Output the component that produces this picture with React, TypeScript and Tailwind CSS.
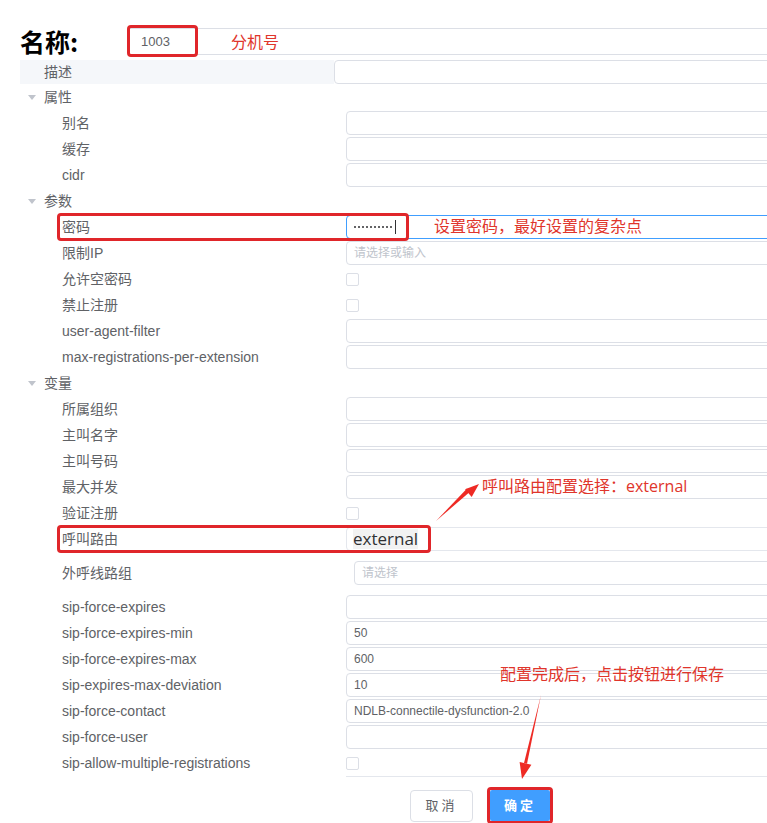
import React from "react";

const FONT = "font-['Liberation_Sans','Noto_Sans_CJK_SC',sans-serif]";

function Field({
  value,
  placeholder,
  className = "",
}: {
  value?: string;
  placeholder?: string;
  className?: string;
}) {
  return (
    <div
      className={`h-[24px] flex-1 border border-[#dcdfe6] rounded-[4px] px-[7px] flex items-center text-[12px] ${
        value ? "text-[#606266]" : "text-[#c0c4cc]"
      } ${className}`}
    >
      {value ?? placeholder ?? ""}
    </div>
  );
}

function Check() {
  return <div className="w-[13px] h-[13px] border border-[#dcdfe6] rounded-[2px] bg-white" />;
}

function Row({
  label,
  children,
  h = "h-[26px]",
}: {
  label: string;
  children?: React.ReactNode;
  h?: string;
}) {
  return (
    <div className={`${h} flex items-center relative`}>
      <div className="w-[326px] pl-[42px] text-[14px] leading-[18px] pb-[1px] text-[#606266] shrink-0 whitespace-nowrap">{label}</div>
      <div className="flex-1 flex items-center">{children}</div>
    </div>
  );
}

function Group({ label }: { label: string }) {
  return (
    <div className="h-[26px] flex items-center">
      <div className="w-[24px] flex justify-end pr-[8px]">
        <svg width="8" height="5" viewBox="0 0 8 5">
          <polygon points="0,0 8,0 4,5" fill="#c0c4cc" />
        </svg>
      </div>
      <div className="text-[14px] leading-[18px] pb-[1px] text-[#606266]">{label}</div>
    </div>
  );
}

const dots = Array.from({ length: 10 });
const RED = "text-[16px] text-[#e0352b] font-['Open_Sans','Noto_Sans_CJK_SC',sans-serif] leading-[20px] whitespace-nowrap";

export default function App() {
  return (
    <div className={`relative w-[767px] h-[823px] overflow-hidden bg-white ${FONT}`}>
      <div className="w-[860px] pl-[20px] pt-[28px]">
        {/* 名称 */}
        <div className="h-[27px] flex items-center">
          <div className="w-[108px] text-[25px] font-bold text-black font-['Noto_Sans_CJK_SC',sans-serif] leading-none">
            名称:
          </div>
          <div className="flex-1 h-[27px] border-y border-[#dcdfe6] flex items-center pl-[13px] text-[13px] text-[#606266]">
            1003
          </div>
        </div>
        {/* 描述 */}
        <div className="mt-[5px] h-[24px] flex items-center">
          <div className="w-[314px] h-[24px] bg-[#f5f7fa] pl-[24px] flex items-center text-[14px] text-[#606266]">
            描述
          </div>
          <Field />
        </div>
        <Group label="属性" />
        <Row label="别名"><Field /></Row>
        <Row label="缓存"><Field /></Row>
        <Row label="cidr"><Field /></Row>
        <Group label="参数" />
        <Row label="密码">
          <div className="h-[24px] flex-1 border border-[#409eff] rounded-[4px] pl-[7px] flex items-center gap-[2px]">
            {dots.map((_, i) => (
              <span key={i} className="w-[2px] h-[2px] rounded-full bg-[#303133]" />
            ))}
            <span className="ml-[1px] w-px h-[14px] bg-[#303133]" />
          </div>
        </Row>
        <Row label="限制IP"><Field placeholder="请选择或输入" /></Row>
        <Row label="允许空密码"><Check /></Row>
        <Row label="禁止注册"><Check /></Row>
        <Row label="user-agent-filter"><Field /></Row>
        <Row label="max-registrations-per-extension"><Field /></Row>
        <Group label="变量" />
        <Row label="所属组织"><Field /></Row>
        <Row label="主叫名字"><Field /></Row>
        <Row label="主叫号码"><Field /></Row>
        <Row label="最大并发"><Field /></Row>
        <Row label="验证注册"><Check /></Row>
        <Row label="呼叫路由">
          <div className="h-[24px] flex-1 border border-[#e4e7ed] rounded-[4px] pl-[6px] flex items-center">
            <span className="text-[17px] text-[#303133] bg-[#f2f2f2] font-['Open_Sans',sans-serif] leading-[20px]">
              external
            </span>
          </div>
        </Row>
        <Row label="外呼线路组" h="h-[42px]">
          <Field placeholder="请选择" className="ml-[8px]" />
        </Row>
        <Row label="sip-force-expires"><Field /></Row>
        <Row label="sip-force-expires-min"><Field value="50" /></Row>
        <Row label="sip-force-expires-max"><Field value="600" /></Row>
        <Row label="sip-expires-max-deviation"><Field value="10" /></Row>
        <Row label="sip-force-contact"><Field value="NDLB-connectile-dysfunction-2.0" /></Row>
        <Row label="sip-force-user"><Field /></Row>
        <Row label="sip-allow-multiple-registrations"><Check /></Row>
        <div className="ml-[326px] h-px bg-[#e4e7ed]" />
        <div className="flex items-center pl-[390px] pt-[10px] gap-[14px]">
          <button className="w-[63px] h-[32px] border border-[#dcdfe6] rounded-[4px] bg-white text-[13px] text-[#606266] tracking-[3px]">
            取消
          </button>
          <div className="border-[3px] border-[#e0262a] rounded-[4px] p-0">
            <button className="w-[60px] h-[31px] bg-[#409eff] rounded-[2px] text-[13px] text-white font-bold tracking-[3px]">
              确定
            </button>
          </div>
        </div>
      </div>

      {/* Annotations */}
      <div className="absolute left-[127px] top-[25px] w-[71px] h-[32px] border-[3px] border-[#e0262a] rounded-[4px]" />
      <div className={`absolute left-[231px] top-[32px] ${RED}`}>分机号</div>
      <div className="absolute left-[57px] top-[213px] w-[352px] h-[28px] border-[3px] border-[#e0262a] rounded-[4px]" />
      <div className={`absolute left-[434px] top-[216px] ${RED}`}>设置密码，最好设置的复杂点</div>
      <div className="absolute left-[57px] top-[525px] w-[374px] h-[28px] border-[3px] border-[#e0262a] rounded-[4px]" />
      <div className={`absolute left-[482px] top-[476px] ${RED}`}>呼叫路由配置选择：external</div>
      <div className={`absolute left-[500px] top-[664px] ${RED}`}>配置完成后，点击按钮进行保存</div>
      <svg className="absolute left-0 top-0 pointer-events-none" width="767" height="823" viewBox="0 0 767 823">
        <polygon points="436,521 470,491.7 467,488.5" fill="#ee2a24" />
        <polygon points="479,484 471.7,496.9 465.1,489.3" fill="#ee2a24" />
        <polygon points="541,695 527,763.8 524,763" fill="#ee2a24" />
        <polygon points="522,779 531.4,764.7 519.6,762.1" fill="#ee2a24" />
      </svg>
    </div>
  );
}
